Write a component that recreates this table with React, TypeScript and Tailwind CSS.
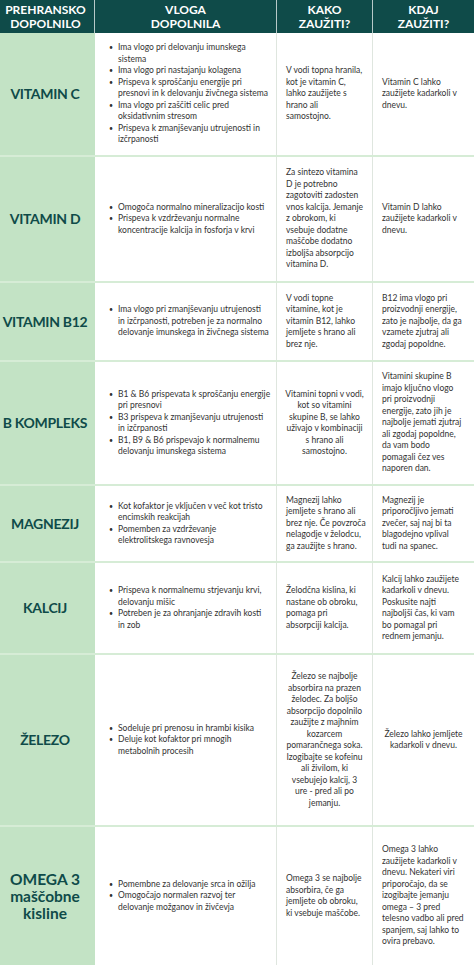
import React from "react";

type Row = {
  name: string[];
  height: string;
  bullets: string[][];
  how: string[];
  howCenter?: boolean;
  when: string[];
  whenCenter?: boolean;
};

const rows: Row[] = [
  {
    name: ["VITAMIN C"],
    height: "h-[124px]",
    bullets: [
      ["Ima vlogo pri delovanju imunskega", "sistema"],
      ["Ima vlogo pri nastajanju kolagena"],
      ["Prispeva k sproščanju energije pri", "presnovi in k delovanju živčnega sistema"],
      ["Ima vlogo pri zaščiti celic pred", "oksidativnim stresom"],
      ["Prispeva k zmanjševanju utrujenosti in", "izčrpanosti"],
    ],
    how: ["V vodi topna hranila,", "kot je vitamin C,", "lahko zaužijete s", "hrano ali", "samostojno."],
    when: ["Vitamin C lahko", "zaužijete kadarkoli v", "dnevu."],
  },
  {
    name: ["VITAMIN D"],
    height: "h-[126px]",
    bullets: [
      ["Omogoča normalno mineralizacijo kosti"],
      ["Prispeva k vzdrževanju normalne", "koncentracije kalcija in fosforja v krvi"],
    ],
    how: [
      "Za sintezo vitamina",
      "D je potrebno",
      "zagotoviti zadosten",
      "vnos kalcija. Jemanje",
      "z obrokom, ki",
      "vsebuje dodatne",
      "maščobe dodatno",
      "izboljša absorpcijo",
      "vitamina D.",
    ],
    when: ["Vitamin D lahko", "zaužijete kadarkoli v", "dnevu."],
  },
  {
    name: ["VITAMIN B12"],
    height: "h-[79px]",
    bullets: [
      [
        "Ima vlogo pri zmanjševanju utrujenosti",
        "in izčrpanosti, potreben je za normalno",
        "delovanje imunskega in živčnega sistema",
      ],
    ],
    how: ["V vodi topne", "vitamine, kot je", "vitamin B12, lahko", "jemljete s hrano ali", "brez nje."],
    when: ["B12 ima vlogo pri", "proizvodnji energije,", "zato je najbolje, da ga", "vzamete zjutraj ali", "zgodaj popoldne."],
  },
  {
    name: ["B KOMPLEKS"],
    height: "h-[124px]",
    bullets: [
      ["B1 & B6 prispevata k sproščanju energije", "pri presnovi"],
      ["B3 prispeva k zmanjševanju utrujenosti", "in izčrpanosti"],
      ["B1, B9 & B6 prispevajo k normalnemu", "delovanju imunskega sistema"],
    ],
    how: ["Vitamini topni v vodi,", "kot so vitamini", "skupine B, se lahko", "uživajo v kombinaciji", "s hrano ali", "samostojno."],
    howCenter: true,
    when: [
      "Vitamini skupine B",
      "imajo ključno vlogo",
      "pri proizvodnji",
      "energije, zato jih je",
      "najbolje jemati zjutraj",
      "ali zgodaj popoldne,",
      "da vam bodo",
      "pomagali čez ves",
      "naporen dan.",
    ],
  },
  {
    name: ["MAGNEZIJ"],
    height: "h-[77px]",
    bullets: [
      ["Kot kofaktor je vključen v več kot tristo", "encimskih reakcijah"],
      ["Pomemben za vzdrževanje", "elektrolitskega ravnovesja"],
    ],
    how: ["Magnezij lahko", "jemljete s hrano ali", "brez nje. Če povzroča", "nelagodje v želodcu,", "ga zaužijte s hrano."],
    when: ["Magnezij je", "priporočljivo jemati", "zvečer, saj naj bi ta", "blagodejno vplival", "tudi na spanec."],
  },
  {
    name: ["KALCIJ"],
    height: "h-[92px]",
    bullets: [
      ["Prispeva k normalnemu strjevanju krvi,", "delovanju mišic"],
      ["Potreben je za ohranjanje zdravih kosti", "in zob"],
    ],
    how: ["Želodčna kislina, ki", "nastane ob obroku,", "pomaga pri", "absorpciji kalcija."],
    when: [
      "Kalcij lahko zaužijete",
      "kadarkoli v dnevu.",
      "Poskusite najti",
      "najboljši čas, ki vam",
      "bo pomagal pri",
      "rednem jemanju.",
    ],
  },
  {
    name: ["ŽELEZO"],
    height: "h-[172px]",
    bullets: [
      ["Sodeluje pri prenosu in hrambi kisika"],
      ["Deluje kot kofaktor pri mnogih", "metabolnih procesih"],
    ],
    how: [
      "Železo se najbolje",
      "absorbira na prazen",
      "želodec. Za boljšo",
      "absorpcijo dopolnilo",
      "zaužijte z majhnim",
      "kozarcem",
      "pomarančnega soka.",
      "Izogibajte se kofeinu",
      "ali živilom, ki",
      "vsebujejo kalcij, 3",
      "ure - pred ali po",
      "jemanju.",
    ],
    howCenter: true,
    when: ["Železo lahko jemljete", "kadarkoli v dnevu."],
    whenCenter: true,
  },
  {
    name: ["OMEGA 3", "maščobne", "kisline"],
    height: "h-[138px]",
    bullets: [
      ["Pomembne za delovanje srca in ožilja"],
      ["Omogočajo normalen razvoj ter", "delovanje možganov in živčevja"],
    ],
    how: ["Omega 3 se najbolje", "absorbira, če ga", "jemljete ob obroku,", "ki vsebuje maščobe."],
    when: [
      "Omega 3 lahko",
      "zaužijete kadarkoli v",
      "dnevu. Nekateri viri",
      "priporočajo, da se",
      "izogibajte jemanju",
      "omega – 3 pred",
      "telesno vadbo ali pred",
      "spanjem, saj lahko to",
      "ovira prebavo.",
    ],
  },
];

function Lines({ lines }: { lines: string[] }) {
  return (
    <>
      {lines.map((l, i) => (
        <span key={i} className="block whitespace-nowrap">
          {l}
        </span>
      ))}
    </>
  );
}

export default function App() {
  return (
    <div className="w-[474px] h-[965px] overflow-hidden bg-white font-['Lato',sans-serif] text-[#333333]">
      {/* Header */}
      <div className="grid grid-cols-[95px_182px_96px_101px] h-[33px] bg-[#0f4b49] text-white font-bold text-[12px] leading-[13.5px] text-center">
        <div className="flex items-center justify-center border-r border-white/70 pr-[3px]">
          <span>
            PREHRANSKO
            <br />
            DOPOLNILO
          </span>
        </div>
        <div className="flex items-center justify-center border-r border-white/70">
          <span>
            VLOGA
            <br />
            DOPOLNILA
          </span>
        </div>
        <div className="flex items-center justify-center border-r border-white/70">
          <span>
            KAKO
            <br />
            ZAUŽITI?
          </span>
        </div>
        <div className="flex items-center justify-center">
          <span>
            KDAJ
            <br />
            ZAUŽITI?
          </span>
        </div>
      </div>

      {/* Rows */}
      {rows.map((row) => (
        <div
          key={row.name.join(" ")}
          className={`grid grid-cols-[95px_182px_96px_101px] ${row.height} border-b-2 border-[#d6ecd6] last:border-b-0`}
        >
          <div className="flex items-center justify-center bg-[#c3e3c5] pr-[5px] text-center">
            <span
              className={`font-bold text-[#0f4b49] ${
                row.name.length > 1
                  ? "text-[15.5px] leading-[17px]"
                  : "text-[14px] leading-[16px] tracking-[-0.3px]"
              }`}
            >
              <Lines lines={row.name} />
            </span>
          </div>
          <div className="flex items-center border-r border-[#dfe6df] pl-[14px] pr-[4px] text-[8.5px] leading-[11.5px]">
            <ul className="flex flex-col">
              {row.bullets.map((b, i) => (
                <li key={i} className="flex">
                  <span className="w-[9px] shrink-0 text-[7px]">•</span>
                  <span>
                    <Lines lines={b} />
                  </span>
                </li>
              ))}
            </ul>
          </div>
          <div
            className={`flex items-center border-r border-[#dfe6df] px-[9px] text-[8.5px] leading-[11.5px] ${
              row.howCenter ? "justify-center text-center" : ""
            }`}
          >
            <div>
              <Lines lines={row.how} />
            </div>
          </div>
          <div
            className={`flex items-center px-[9px] text-[8.5px] leading-[11.5px] ${
              row.whenCenter ? "justify-center text-center" : ""
            }`}
          >
            <div>
              <Lines lines={row.when} />
            </div>
          </div>
        </div>
      ))}
    </div>
  );
}
